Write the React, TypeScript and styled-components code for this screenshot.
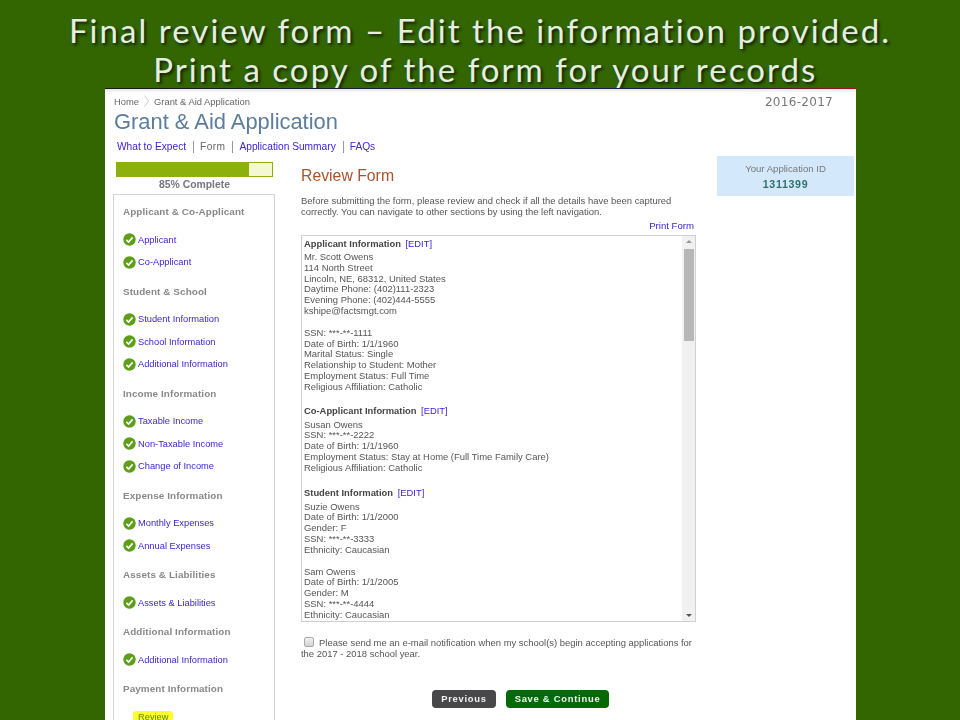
import React from "react"
import styled, { createGlobalStyle } from "styled-components"

const GlobalStyle = createGlobalStyle`
  html, body {
    margin: 0;
    height: 720px;
    overflow: hidden;
    background: #336600;
    font-family: "Liberation Sans", Arial, sans-serif;
  }
`;

const Slide = styled.div`
  width: 960px;
  height: 720px;
  overflow: hidden;
  display: flex;
  flex-direction: column;
  align-items: center;
`;

const Title = styled.h1`
  margin: 0;
  height: 88px;
  box-sizing: border-box;
  padding-top: 11px;
  width: 100%;
  text-align: center;
  font-family: Lato, sans-serif;
  font-weight: 400;
  font-size: 33px;
  line-height: 39px;
  letter-spacing: 2.05px;
  color: #e6eee0;
  text-shadow: 2px 2px 3px #0f2200;
`;

const Panel = styled.div`
  width: 751px;
  margin-left: 1px;
  flex: 1;
  box-sizing: border-box;
  background: #fff;
  border-top: 1px solid #1a1a1a;
  border-image: linear-gradient(90deg, #1a1a1a, #16204a 40%, #16204a 84%, #a81414) 1;
  filter: blur(0.3px);
`;

const TopStripe = styled.div`
  height: 3px;
  background: linear-gradient(#e6e6e6, #f8f8f8);
`;

const Header = styled.div`
  padding: 2px 23px 0 9px;
  height: 49px;
  box-sizing: border-box;
  display: grid;
  grid-template-columns: 1fr auto;
  align-content: start;
`;

const Crumbs = styled.div`
  display: flex;
  align-items: center;
  gap: 5px;
  height: 14px;
  font-size: 9.4px;
  color: #666;
`;

const Year = styled.div`
  font-family: "DejaVu Sans", sans-serif;
  font-size: 12px;
  letter-spacing: 0.3px;
  line-height: 16px;
  color: #777;
`;

const Heading = styled.div`
  grid-column: 1 / span 2;
  font-size: 21.9px;
  line-height: 28px;
  margin-top: -2px;
  color: #5c7d9b;
`;

const Nav = styled.nav`
  display: flex;
  align-items: center;
  padding-left: 12px;
  height: 14px;
  font-size: 10.2px;
  margin-top: -1px;
`;

const NavItem = styled.span<{ $current?: boolean; $divided?: boolean }>`
  color: ${props => props.$current ? "#666" : "#3b26cf"};
  letter-spacing: ${props => props.$current ? "0.4px" : "0"};
  padding-left: ${props => props.$divided ? "6px" : "0"};
  margin-left: ${props => props.$divided ? "7px" : "0"};
  border-left: ${props => props.$divided ? "1px solid #999" : "none"};
  line-height: 12px;
`;

const Columns = styled.div`
  display: grid;
  grid-template-columns: 162px 421px 137px;
  padding: 2px 0 0 8px;
`;

const SideColumn = styled.aside`
  padding-top: 6px;
`;

const ProgressTrack = styled.div`
  width: 155px;
  height: 13px;
  margin-left: 3px;
  border: 1px solid #8fb010;
  background: #f3f8d2;
`;

const ProgressFill = styled.div`
  height: 100%;
  background: #8cb00c;
`;

const ProgressLabel = styled.div`
  width: 157px;
  margin: 1px 0 2px 3px;
  text-align: center;
  font-size: 10.4px;
  font-weight: 700;
  line-height: 14px;
  color: #777;
`;

const SideBox = styled.div`
  border: 1px solid #d4d4d4;
  border-bottom: none;
  height: 560px;
  padding: 10px 0 0 9px;
`;

const SideHeading = styled.div`
  font-size: 9.9px;
  font-weight: 700;
  color: #888;
  line-height: 14px;
  margin-bottom: 9.5px;
  letter-spacing: 0.1px;
`;

const SideList = styled.ul`
  list-style: none;
  margin: 0 0 11px;
  padding: 0;
`;

const SideItem = styled.li`
  display: flex;
  align-items: center;
  gap: 2px;
  height: 22.5px;
  font-size: 9.3px;
  color: #3b26cf;
`;

const ReviewLabel = styled.span`
  display: inline-block;
  margin: 3px 0 0 10px;
  padding: 1px 5px;
  font-size: 9.3px;
  line-height: 10px;
  color: #5b8a10;
  background: #fcfc30;
  border-radius: 3px;
`;

const MainColumn = styled.main`
  margin-left: 26px;
  padding-top: 10px;
`;

const SectionTitle = styled.h2`
  margin: 0 0 10px;
  font-size: 15.8px;
  font-weight: 400;
  line-height: 20px;
  color: #a8542c;
`;

const Paragraph = styled.p`
  margin: 0;
  font-size: 9.45px;
  line-height: 10.8px;
  color: #555;
`;

const PrintLink = styled.div`
  margin-top: 2px;
  text-align: right;
  padding-right: 2px;
  font-size: 9.6px;
  line-height: 12px;
  color: #3b26cf;
`;

const ScrollBox = styled.div`
  position: relative;
  margin-top: 3px;
  height: 387px;
  box-sizing: border-box;
  overflow: hidden;
  border: 1px solid #d0d0d0;
  padding: 2px 2px;
`;

const InfoHeading = styled.div`
  height: 14.5px;
  font-size: 9.4px;
  font-weight: 700;
  line-height: 12px;
  color: #444;
`;

const EditLink = styled.span`
  margin-left: 2px;
  font-weight: 400;
  color: #3b26cf;
`;

const InfoBlock = styled.div<{ $gap?: number }>`
  font-size: 9.45px;
  line-height: 10.8px;
  color: #555;
  margin-bottom: ${props => props.$gap ?? 11}px;
`;

const ScrollTrack = styled.div`
  position: absolute;
  top: 0;
  right: 0;
  bottom: 0;
  width: 13px;
  background: #f1f1f1;
  display: flex;
  flex-direction: column;
  align-items: center;
`;

const ScrollArrow = styled.div<{ $down?: boolean }>`
  width: 0;
  height: 0;
  margin: ${props => props.$down ? "auto 0 4px" : "4px 0 0"};
  border-left: 3px solid transparent;
  border-right: 3px solid transparent;
  border-top: ${props => props.$down ? "3px solid #555" : "none"};
  border-bottom: ${props => props.$down ? "none" : "3px solid #999"};
`;

const ScrollThumb = styled.div`
  width: 10px;
  height: 92px;
  margin-top: 6px;
  background: #b7b7b7;
`;

const Consent = styled.p`
  margin: 15px 0 0;
  font-size: 9.45px;
  line-height: 11.5px;
  color: #555;
`;

const ConsentBox = styled.span`
  display: inline-block;
  width: 10px;
  height: 10px;
  margin: 0 5px 0 3px;
  vertical-align: -1px;
  box-sizing: border-box;
  border: 1px solid #aaa;
  border-radius: 2px;
  background: linear-gradient(#f2f2f2, #d2d2d2);
`;

const ButtonRow = styled.div`
  display: flex;
  justify-content: flex-start;
  gap: 10px;
  padding-left: 131px;
  margin-top: 30px;
`;

const ActionButton = styled.button<{ $primary?: boolean }>`
  height: 18px;
  padding: 0;
  width: ${props => props.$primary ? "103px" : "64px"};
  border: none;
  border-radius: 4px;
  background: ${props => props.$primary ? "#046a06" : "#48484a"};
  color: #f2f2f2;
  font-family: "Liberation Sans", Arial, sans-serif;
  font-size: 9.4px;
  font-weight: 700;
  letter-spacing: 0.75px;
`;

const IdBox = styled.div`
  margin-left: 21px;
  height: 40px;
  width: 137px;
  background: #d3e9fb;
  text-align: center;
  padding-top: 6px;
  box-sizing: border-box;
`;

const IdLabel = styled.div`
  font-size: 9.6px;
  line-height: 13px;
  color: #777;
`;

const IdValue = styled.div`
  margin-top: 3px;
  font-size: 10.6px;
  font-weight: 700;
  line-height: 13px;
  letter-spacing: 0.7px;
  color: #2f6f70;
`;

const sections = [
  { title: "Applicant & Co-Applicant", items: ["Applicant", "Co-Applicant"] },
  { title: "Student & School", items: ["Student Information", "School Information", "Additional Information"] },
  { title: "Income Information", items: ["Taxable Income", "Non-Taxable Income", "Change of Income"] },
  { title: "Expense Information", items: ["Monthly Expenses", "Annual Expenses"] },
  { title: "Assets & Liabilities", items: ["Assets & Liabilities"] },
  { title: "Additional Information", items: ["Additional Information"] },
];

function CheckIcon() {
  return (
    <svg width="13" height="13" viewBox="0 0 13 13" style={{ flex: "none" }}>
      <circle cx="6.5" cy="6.5" r="6.2" fill="#5f9e18" />
      <path d="M3.4 6.8 L5.6 9 L9.6 4.4" fill="none" stroke="#fff" strokeWidth="1.7" />
    </svg>
  );
}

function Lines({ lines, gap }: { lines: string[]; gap?: number }) {
  return (
    <InfoBlock $gap={gap}>
      {lines.map(line => <div key={line}>{line}</div>)}
    </InfoBlock>
  );
}

export default function App() {
  return (
    <Slide>
      <GlobalStyle />
      <Title>
        Final review form – Edit the information provided.
        <br />
        &nbsp;Print a copy of the form for your records
      </Title>
      <Panel>
        <TopStripe />
        <Header>
          <Crumbs>
            <span>Home</span>
            <svg width="5" height="12" viewBox="0 0 5 12">
              <path d="M0.5 0.5 L4.5 6 L0.5 11.5" fill="none" stroke="#ccc" />
            </svg>
            <span>Grant &amp; Aid Application</span>
          </Crumbs>
          <Year>2016-2017</Year>
          <Heading>Grant &amp; Aid Application</Heading>
        </Header>
        <Nav>
          <NavItem>What to Expect</NavItem>
          <NavItem $current $divided>Form</NavItem>
          <NavItem $divided>Application Summary</NavItem>
          <NavItem $divided>FAQs</NavItem>
        </Nav>
        <Columns>
          <SideColumn>
            <ProgressTrack>
              <ProgressFill style={{ width: "85%" }} />
            </ProgressTrack>
            <ProgressLabel>85% Complete</ProgressLabel>
            <SideBox>
              {sections.map(section => (
                <React.Fragment key={section.title}>
                  <SideHeading>{section.title}</SideHeading>
                  <SideList>
                    {section.items.map(item => (
                      <SideItem key={item}>
                        <CheckIcon />
                        {item}
                      </SideItem>
                    ))}
                  </SideList>
                </React.Fragment>
              ))}
              <SideHeading>Payment Information</SideHeading>
              <ReviewLabel>Review</ReviewLabel>
            </SideBox>
          </SideColumn>
          <MainColumn>
            <SectionTitle>Review Form</SectionTitle>
            <Paragraph>
              Before submitting the form, please review and check if all the details have been captured
              <br />
              correctly. You can navigate to other sections by using the left navigation.
            </Paragraph>
            <PrintLink>Print Form</PrintLink>
            <ScrollBox>
              <InfoHeading>Applicant Information <EditLink>[EDIT]</EditLink></InfoHeading>
              <Lines lines={["Mr. Scott Owens", "114 North Street", "Lincoln, NE, 68312, United States", "Daytime Phone: (402)111-2323", "Evening Phone: (402)444-5555", "kshipe@factsmgt.com"]} />
              <Lines gap={12.5} lines={["SSN: ***-**-1111", "Date of Birth: 1/1/1960", "Marital Status: Single", "Relationship to Student: Mother", "Employment Status: Full Time", "Religious Affiliation: Catholic"]} />
              <InfoHeading>Co-Applicant Information <EditLink>[EDIT]</EditLink></InfoHeading>
              <Lines gap={13.5} lines={["Susan Owens", "SSN: ***-**-2222", "Date of Birth: 1/1/1960", "Employment Status: Stay at Home (Full Time Family Care)", "Religious Affiliation: Catholic"]} />
              <InfoHeading>Student Information <EditLink>[EDIT]</EditLink></InfoHeading>
              <Lines lines={["Suzie Owens", "Date of Birth: 1/1/2000", "Gender: F", "SSN: ***-**-3333", "Ethnicity: Caucasian"]} />
              <Lines lines={["Sam Owens", "Date of Birth: 1/1/2005", "Gender: M", "SSN: ***-**-4444", "Ethnicity: Caucasian"]} />
              <ScrollTrack>
                <ScrollArrow />
                <ScrollThumb />
                <ScrollArrow $down />
              </ScrollTrack>
            </ScrollBox>
            <Consent>
              <ConsentBox />
              Please send me an e-mail notification when my school(s) begin accepting applications for
              <br />
              the 2017 - 2018 school year.
            </Consent>
            <ButtonRow>
              <ActionButton>Previous</ActionButton>
              <ActionButton $primary>Save &amp; Continue</ActionButton>
            </ButtonRow>
          </MainColumn>
          <IdBox>
            <IdLabel>Your Application ID</IdLabel>
            <IdValue>1311399</IdValue>
          </IdBox>
        </Columns>
      </Panel>
    </Slide>
  );
}
